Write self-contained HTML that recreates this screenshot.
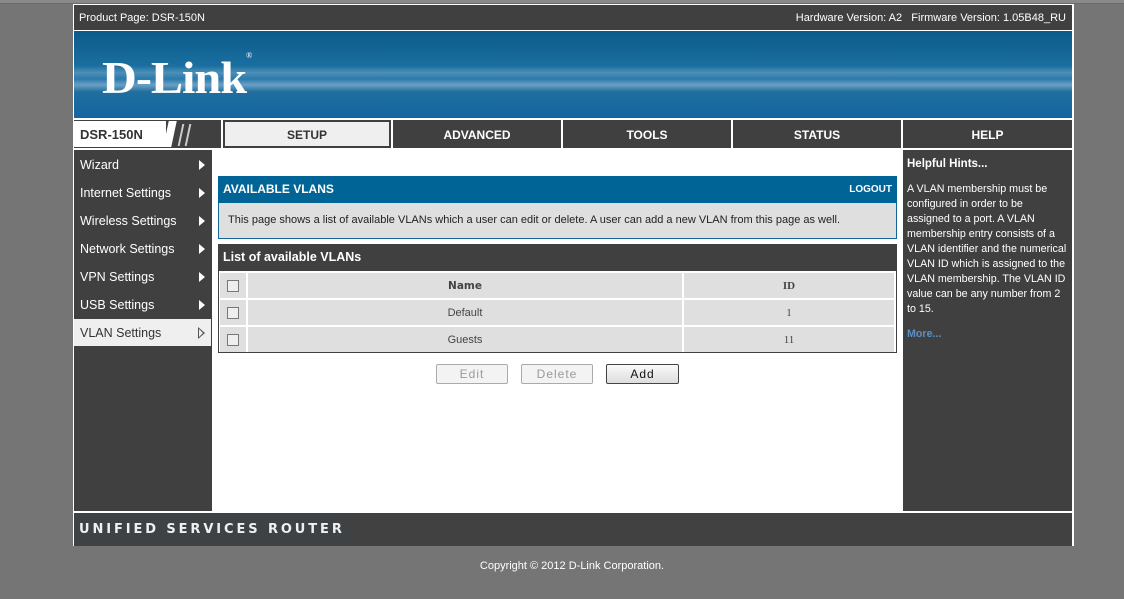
<!DOCTYPE html>
<html><head><meta charset="utf-8"><style>
*{margin:0;padding:0;box-sizing:border-box}
body{width:1124px;height:599px;background:#757575;font-family:"Liberation Sans",sans-serif;font-size:12px;position:relative;overflow:hidden;color:#222}
.a{position:absolute}
.tabs{left:0;top:0;width:1124px;height:4px;background:#8a8a8a;border-bottom:1px solid #6a6a6a}
.frame{left:73px;top:4px;width:1001px;height:542px;background:#fff}
.top{left:74px;top:5px;width:998px;height:25px;background:#404040;color:#fff;font-size:11px;line-height:26px;padding:0 6px 0 5px}
.banner{left:74px;top:31px;width:998px;height:87px;background:linear-gradient(180deg,#0c5a8a 0%,#1a6fa0 40%,#4f8fb7 48%,#2a7aab 55%,#6aa0c4 62%,#1f6e9e 70%,#1466a0 100%)}
.logo{left:102px;top:51px;font-family:"Liberation Serif",serif;font-weight:bold;font-size:46px;color:#fff;letter-spacing:-1px;transform:scaleX(1.05);transform-origin:left}
.nav{top:120px;height:28px;background:#404040;color:#fff;font-weight:bold;text-align:center;line-height:30px;font-size:12px}
.left{left:74px;top:150px;width:138px;height:361px;background:#404040}
.li{left:74px;width:137px;height:27px;background:#404040;color:#fff;font-size:12.5px;line-height:29px;padding-left:6px}
.li:after{content:"";position:absolute;right:6px;top:9px;border-left:6px solid #fff;border-top:5px solid transparent;border-bottom:5px solid transparent}
.right{left:903px;top:150px;width:169px;height:361px;background:#404040;color:#fff;font-size:10.7px;line-height:15px;padding:7px 4px;white-space:nowrap;overflow:hidden}
.content{left:214px;top:150px;width:687px;height:361px;background:#fff}
td{background:#dfdfdf;height:25px;text-align:center;font-size:11px;color:#444}
.cb{display:inline-block;width:12px;height:12px;border:1px solid #777;background:#eee;vertical-align:middle}
.btn{top:364px;height:20px;border:1px solid #aaa;background:#f3f3f3;color:#999;text-align:center;line-height:18px;font-size:12px;letter-spacing:1px;border-radius:2px}
</style></head><body>
<div class="a tabs"></div>
<div class="a frame"></div>
<div class="a top">Product Page: DSR-150N<span style="float:right">Hardware Version: A2&nbsp;&nbsp; Firmware Version: 1.05B48_RU</span></div>
<div class="a banner"></div>
<div class="a logo">D-Link<sup style="font-size:8px;font-weight:normal;vertical-align:top">®</sup></div>
<div class="a nav" style="left:74px;width:147px;background:#404040"></div>
<div class="a" style="left:74px;top:121px;width:92px;height:26px;background:#fff;color:#333;font-weight:bold;font-size:13px;line-height:28px;padding-left:6px">DSR-150N</div>
<div class="a" style="left:166px;top:121px;width:8px;height:26px;background:#fff;transform:skewX(-12deg)"></div>
<div class="a" style="left:180px;top:124px;width:2px;height:22px;background:#ccc;transform:skewX(-12deg)"></div>
<div class="a" style="left:187px;top:124px;width:2px;height:22px;background:#ccc;transform:skewX(-12deg)"></div>
<div class="a nav" style="left:223px;width:168px;background:#efefef;color:#333;border:2px solid #404040;line-height:26px">SETUP</div>
<div class="a nav" style="left:393px;width:168px">ADVANCED</div>
<div class="a nav" style="left:563px;width:168px">TOOLS</div>
<div class="a nav" style="left:733px;width:168px">STATUS</div>
<div class="a nav" style="left:903px;width:169px">HELP</div>
<div class="a left"></div>
<div class="a li" style="top:151px">Wizard</div>
<div class="a li" style="top:179px">Internet Settings</div>
<div class="a li" style="top:207px">Wireless Settings</div>
<div class="a li" style="top:235px">Network Settings</div>
<div class="a li" style="top:263px">VPN Settings</div>
<div class="a li" style="top:291px">USB Settings</div>
<div class="a" style="left:74px;top:319px;width:137px;height:27px;background:#efefef;color:#333;font-size:12.5px;line-height:29px;padding-left:6px">VLAN Settings<span style="position:absolute;right:6px;top:8px;width:0;height:0;border-left:7px solid #555;border-top:6px solid transparent;border-bottom:6px solid transparent"></span><span style="position:absolute;right:8px;top:10px;width:0;height:0;border-left:4px solid #efefef;border-top:4px solid transparent;border-bottom:4px solid transparent"></span></div>
<div class="a content"></div>
<div class="a" style="left:218px;top:176px;width:679px;height:63px;border:1px solid #136799;background:#dfdfdf"></div>
<div class="a" style="left:218px;top:176px;width:679px;height:27px;background:#006497;color:#fff;font-weight:bold;line-height:27px;padding:0 5px">AVAILABLE VLANS<span style="float:right;font-size:10px">LOGOUT</span></div>
<div class="a" style="left:228px;top:214px;font-size:11px;color:#222">This page shows a list of available VLANs which a user can edit or delete. A user can add a new VLAN from this page as well.</div>
<div class="a" style="left:218px;top:244px;width:679px;height:109px;border:1px solid #404040;background:#fff"></div>
<div class="a" style="left:218px;top:244px;width:679px;height:27px;background:#404040;color:#fff;font-weight:bold;line-height:27px;padding-left:5px;font-size:12.5px">List of available VLANs</div>
<table class="a" style="left:219px;top:271px;width:678px;border-collapse:separate;border-spacing:2px 2px;margin-left:-1px">
<tr><td style="width:26px"><span class="cb"></span></td><td style="font-weight:bold;font-family:'DejaVu Sans';font-size:10.5px">Name</td><td style="width:210px;font-weight:bold;font-family:'Liberation Serif';font-size:11px">ID</td></tr>
<tr><td><span class="cb"></span></td><td>Default</td><td style="font-family:'Liberation Serif'">1</td></tr>
<tr><td><span class="cb"></span></td><td>Guests</td><td style="font-family:'Liberation Serif'">11</td></tr>
</table>
<div class="a btn" style="left:436px;width:72px">Edit</div>
<div class="a btn" style="left:521px;width:72px">Delete</div>
<div class="a btn" style="left:606px;width:73px;border-color:#444;color:#111;background:linear-gradient(#fafafa,#ddd)">Add</div>
<div class="a right"><b style="font-size:11.5px">Helpful Hints...</b><br><div style="margin-top:10px">A VLAN membership must be<br>configured in order to be<br>assigned to a port. A VLAN<br>membership entry consists of a<br>VLAN identifier and the numerical<br>VLAN ID which is assigned to the<br>VLAN membership. The VLAN ID<br>value can be any number from 2<br>to 15.</div><div style="margin-top:10px;color:#5b8fc7;font-weight:bold">More...</div></div>
<div class="a" style="left:74px;top:513px;width:998px;height:33px;background:#414141"></div>
<div class="a" style="left:74px;top:513px;width:275px;height:33px;background:#3f4244"></div>
<div class="a" style="left:79px;top:522px;color:#f0f0f0;font-weight:bold;font-size:13px;letter-spacing:2.9px;font-family:'DejaVu Sans',sans-serif">UNIFIED SERVICES ROUTER</div>
<div class="a" style="left:0;top:560px;width:1144px;text-align:center;color:#fff;font-size:11px">Copyright © 2012 D-Link Corporation.</div>
</body></html>
